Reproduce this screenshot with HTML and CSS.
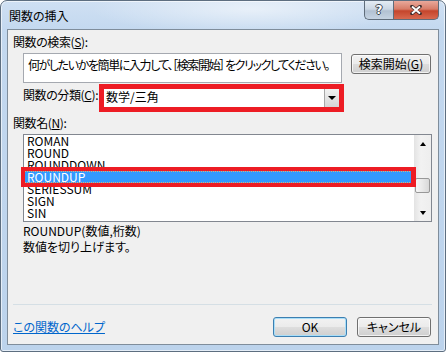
FILE: index.html
```html
<!DOCTYPE html>
<html lang="ja">
<head>
    <meta charset="UTF-8">
    <title>関数の挿入</title>
    <link rel="stylesheet" href="styles.css">
</head>
<body>
    <div class="window">
        <!-- タイトルバー -->
        <div class="titlebar">
            <span class="title">関数の挿入</span>
            <div class="caption-buttons">
                <span class="cap-btn help">?</span>
                <span class="cap-btn close">
                    <svg width="12" height="10" viewBox="0 0 12 10">
                        <path d="M2 1.5 L10 8.5 M10 1.5 L2 8.5" stroke="#3a2a2a" stroke-width="3.6" stroke-linecap="round"/>
                        <path d="M2 1.5 L10 8.5 M10 1.5 L2 8.5" stroke="#fff" stroke-width="2"/>
                    </svg>
                </span>
            </div>
        </div>

        <div class="client">
            <div class="label">関数の検索(<u>S</u>):</div>
            <div class="search-row">
                <div class="textbox">何がしたいかを簡単に入力して、［検索開始］ をクリックしてください。</div>
                <button class="btn search-btn">検索開始(<u>G</u>)</button>
            </div>

            <div class="category-row">
                <span class="label category-label">関数の分類(<u>C</u>):</span>
                <div class="highlight">
                    <div class="combo">
                        <span class="combo-value">数学/三角</span>
                        <span class="combo-arrow"></span>
                    </div>
                </div>
            </div>

            <div class="label list-label">関数名(<u>N</u>):</div>
            <div class="listbox">
                <ul class="items">
                    <li>ROMAN</li>
                    <li>ROUND</li>
                    <li>ROUNDDOWN</li>
                    <li class="selected">ROUNDUP</li>
                    <li>SERIESSUM</li>
                    <li>SIGN</li>
                    <li>SIN</li>
                </ul>
                <div class="scrollbar">
                    <div class="sb-btn"><span class="arrow-up"></span></div>
                    <div class="sb-track"><div class="sb-thumb"></div></div>
                    <div class="sb-btn"><span class="arrow-down"></span></div>
                </div>
            </div>

            <div class="desc">
                <div class="syntax">ROUNDUP(数値,桁数)</div>
                <div>数値を切り上げます。</div>
            </div>

            <div class="separator"></div>
            <div class="footer">
                <a class="help-link" href="#">この関数のヘルプ</a>
                <button class="btn default">OK</button>
                <button class="btn">キャンセル</button>
            </div>
        </div>
    </div>
</body>
</html>
```

FILE: styles.css
```css
* {
    box-sizing: border-box;
}
body {
    margin: 0;
    background: #fff;
    font-family: "Noto Sans CJK JP", "Liberation Sans", sans-serif;
    font-size: 12px;
    color: #000;
    font-feature-settings: "palt";
}
.window {
    width: 446px;
    height: 352px;
    border: 1px solid #5d6e80;
    border-radius: 7px 7px 3px 3px;
    background:
        radial-gradient(ellipse 160px 26px at 250px 8px, rgba(255,255,255,0.55), rgba(255,255,255,0) 100%),
        linear-gradient(to bottom, #cfe0f3 0, #c3d8ef 30px, #bcd3ec 100%);
    padding: 0 6px 6px 6px;
    display: flex;
    flex-direction: column;
    box-shadow: inset 0 0 0 1px rgba(255,255,255,0.6);
}
.titlebar {
    height: 28px;
    display: flex;
    justify-content: space-between;
    align-items: flex-start;
}
.title {
    padding: 7px 0 0 2px;
    line-height: 16px;
}
.caption-buttons {
    display: flex;
}
.cap-btn {
    height: 19px;
    display: flex;
    align-items: center;
    justify-content: center;
    border: 1px solid #5f6c7a;
    border-top: none;
}
.help {
    width: 29px;
    border-right: none;
    border-radius: 0 0 0 5px;
    background: linear-gradient(to bottom, #e4ecf4 0, #cbd7e4 45%, #b2c1d2 55%, #c5d3e2 100%);
    color: #fff;
    font-family: "DejaVu Sans", sans-serif;
    font-weight: bold;
    font-size: 12px;
    text-shadow: 1px 0 #3c4550, -1px 0 #3c4550, 0 1px #3c4550, 0 -1px #3c4550;
}
.close {
    width: 46px;
    border-radius: 0 0 5px 0;
    background: linear-gradient(to bottom, #e9a99b 0, #d77c68 45%, #c5452c 55%, #d8694f 100%);
}
.client {
    flex: 1;
    border: 1px solid #7f8d9b;
    background: #f0f0f0;
    padding: 4px 6px 7px 5px;
    display: flex;
    flex-direction: column;
}
.label {
    line-height: 15px;
    white-space: nowrap;
    letter-spacing: -0.4px;
}
.search-row {
    display: flex;
    align-items: flex-start;
    margin: 4px 0 0 10px;
}
.textbox {
    width: 319px;
    height: 30px;
    border: 1px solid #a5a9b0;
    background: #fff;
    padding: 3px 0 0 4px;
    line-height: 15px;
    white-space: nowrap;
    overflow: hidden;
    letter-spacing: -1.4px;
}
.btn {
    height: 20px;
    width: 74px;
    font-family: inherit;
    font-size: 12px;
    font-feature-settings: "palt";
    line-height: 16px;
    padding: 0;
    color: #000;
    white-space: nowrap;
    border: 1px solid #707070;
    border-radius: 3px;
    background: linear-gradient(to bottom, #f2f2f2 0, #ebebeb 48%, #dddddd 52%, #cfcfcf 100%);
    box-shadow: inset 0 0 0 1px rgba(255,255,255,0.7);
}
.search-btn {
    width: 80px;
    margin: 1px 0 0 9px;
}
.category-row {
    display: flex;
    align-items: flex-start;
    margin: 1px 0 0 10px;
}
.category-label {
    width: 76px;
    padding-top: 3px;
}
.highlight {
    width: 245px;
    height: 28px;
    border: 5px solid #ed1c24;
}
.combo {
    height: 100%;
    background: #fff;
    display: flex;
    justify-content: space-between;
}
.combo-value {
    line-height: 14px;
    padding: 1px 0 0 2px;
}
.combo-arrow {
    width: 15px;
    border-left: 1px solid #a8a8a8;
    background: linear-gradient(to bottom, #f2f2f2 0, #e4e4e4 50%, #d6d6d6 100%);
    display: flex;
    align-items: center;
    justify-content: center;
}
.combo-arrow::before {
    content: "";
    border-left: 4px solid transparent;
    border-right: 4px solid transparent;
    border-top: 4px solid #000;
}
.list-label {
    margin-top: 3px;
}
.listbox {
    margin: 4px 0 0 10px;
    width: 409px;
    height: 88px;
    border: 1px solid #828790;
    background: #fff;
    display: flex;
}
.items {
    list-style: none;
    margin: 0;
    padding: 0;
    flex: 1;
}
.items li {
    height: 12px;
    line-height: 12px;
    padding-left: 3px;
    white-space: nowrap;
}
.items li.selected {
    position: relative;
    background: #3399ff;
    color: #fff;
    outline: 1px dotted #d9b27a;
    outline-offset: -1px;
}
.items li.selected::after {
    content: "";
    position: absolute;
    left: -3px;
    right: -2px;
    top: -4px;
    bottom: -4px;
    border: 4px solid #ed1c24;
    border-right-width: 5px;
}
.scrollbar {
    width: 17px;
    display: flex;
    flex-direction: column;
    background: linear-gradient(to right, #e3e3e3, #f2f2f2 40%, #eeeeee);
}
.sb-btn {
    height: 17px;
    display: flex;
    align-items: center;
    justify-content: center;
}
.arrow-up {
    border-left: 3px solid transparent;
    border-right: 3px solid transparent;
    border-bottom: 4px solid #000;
}
.arrow-down {
    border-left: 3px solid transparent;
    border-right: 3px solid transparent;
    border-top: 4px solid #000;
}
.sb-track {
    flex: 1;
    padding: 26px 1px 0 1px;
}
.sb-thumb {
    height: 15px;
    border: 1px solid #989898;
    border-radius: 2px;
    background: linear-gradient(to right, #f6f6f6, #e8e8e8 50%, #d8d8d8);
}
.desc {
    margin: 1px 0 0 10px;
    line-height: 16px;
    flex: 1;
}
.separator {
    height: 1px;
    background: #d5dfe5;
}
.footer {
    display: flex;
    align-items: flex-start;
    margin: 12px 1px 0 0;
}
.help-link {
    flex: 1;
    color: #0066cc;
    line-height: 15px;
    margin-top: 2px;
}
.footer .btn + .btn {
    margin-left: 10px;
}
.btn.default {
    border-color: #3c7fb1;
    box-shadow: inset 0 0 0 1px #a9def8;
}
```
